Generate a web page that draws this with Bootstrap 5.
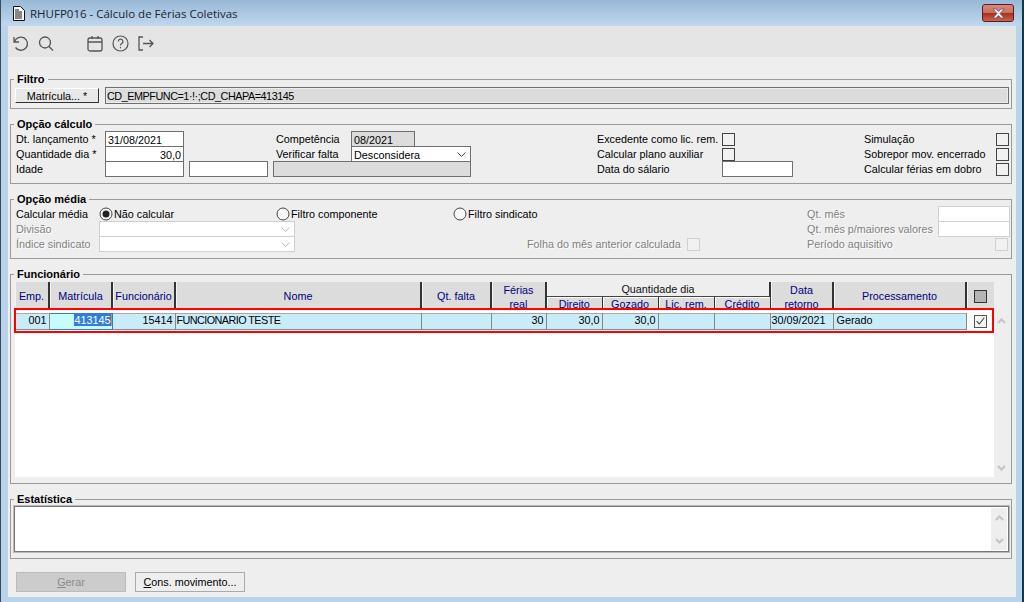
<!DOCTYPE html>
<html lang="pt-BR">
<head>
<meta charset="utf-8">
<title>RHUFP016</title>
<link rel="stylesheet" href="https://cdn.jsdelivr.net/npm/bootstrap@5.3.0/dist/css/bootstrap.min.css">
<style>
html,body{height:100%;overflow:hidden;margin:0}
body{background:#b9d3ec;font-family:"Liberation Sans",Arial,sans-serif;font-size:10.8px;line-height:13px;color:#000}
.wnd{width:1024px;height:602px;display:flex;flex-direction:column;border-left:1px solid #3a4a58;border-right:2px solid #0d3b4a;overflow:hidden}
.ttl{height:26px;flex:none;background:linear-gradient(#98b8d6,#c0d7ee);display:flex;align-items:center;padding:0 8px 0 11px;gap:5px;font-family:"Open Sans",sans-serif;font-size:11.5px;color:#1a2530}
.xbtn{width:32px;height:18px;margin-left:auto;border:1px solid #5a1a2a;border-radius:3px;background:linear-gradient(#d9877c 0,#c9705f 48%,#a82f20 52%,#c9664f 100%);display:flex;align-items:center;justify-content:center}
.body{margin:0 6px 5px 7px;flex:1;background:#eee;display:flex;flex-direction:column;min-height:0}
.tbar{height:31px;flex:none;background:#e5e5e5;display:flex;align-items:center;padding:3px 0 0 4px}
.tbar svg{flex:none;display:block}
.ic2{margin-left:9px}.ic3{margin-left:33px}.ic4{margin-left:9px}.ic5{margin-left:8px}
.main{padding:16px 4px 0 2px;flex:1;min-height:0}
fieldset.grp{border:1px solid #9a9a9a;padding:0 2px 0 5px;margin:0 0 9px;min-width:0}
fieldset.grp legend{float:none;width:auto;font-size:11px;font-weight:700;line-height:12px;margin:0 0 0 -2px;padding:0 3px}
.h36{height:36px}.h66{height:66px}.h216{height:216px}
.pt2{padding-top:2px}.pt1x{padding-top:1px}
.frow{display:flex;column-gap:6px;align-items:flex-start;margin-left:-1px}
.btn.mbtn{width:84px;height:15px;padding:0;font-size:10.8px;line-height:12px;background:#e8e8e8;color:#000;border-radius:0;border:1px solid;border-color:#fff #333 #333 #fff;flex:none;margin-top:1px}
.fld{background:#fff;border:1px solid #6f6f6f;height:16px;line-height:14px;padding:1px 2px 0;white-space:nowrap;overflow:hidden;display:flex;align-items:center;justify-content:space-between}
.fld svg{margin-right:2px}
.fld.gray{background:#dcdcdc}
.fld.r{justify-content:flex-end}
.fld.off{border-color:#d0d0d0}
.filt{flex:1;height:17px;outline:1px solid #ececec;outline-offset:-2px;background:#dcdcdc;padding-left:1px;letter-spacing:-.45px;justify-content:flex-start}
.w64{width:64px;margin-left:1px}
.ml1{margin-left:1px}
.cform{display:grid;grid-template-columns:89px 79px 5px 79px 5px 77px 121px 126px 125px 71px 71px 132px 13px;grid-auto-rows:15px}
.mform{display:grid;grid-template-columns:83px 177px 19px 158px 74px 160px 13px 107px 131px 72px;grid-auto-rows:15px;padding-top:1px}
.lb{white-space:nowrap;padding-top:2px}
.pl3{padding-left:3px}
.dim{color:#808080;text-shadow:1px 1px 0 #fff}
.ck{width:13px;height:13px;border:1px solid #444;background:#f1f1f1;display:block;margin-top:2px}
.ck.off{border-color:#d0d0d0;margin:2px 2px 0 0}
.rad{display:flex;align-items:center;gap:1px;white-space:nowrap;padding-top:1px}
.s2{grid-column:span 2}
.c2{grid-column:2/span 2}.c3{grid-column:3/span 2}.c5{grid-column:5/span 2}.c6{grid-column:6}.c7{grid-column:7}.c9{grid-column:9}.c10{grid-column:10}.c1{grid-column:1}
.tw{position:relative;height:195px;margin-top:2px;background:#fff;margin-left:-1px;padding-right:15px}
.gt{table-layout:fixed;border-collapse:collapse;width:980px}
.gt th{background:#dcdcdc;color:#000080;font-weight:400;text-align:center;border-right:2px solid #333;padding:0;overflow:hidden;vertical-align:middle;line-height:14px;height:14px;box-shadow:inset 1px 0 0 #f4f4f4}
.gt th.sub{background:#dcdcdc;height:12px;border-right:1px solid #333;line-height:12px;padding-top:1px;vertical-align:top;box-shadow:inset 1px 1px 0 #fff}
.gt th.top{background:#eee;color:#111;border-right:2px solid #333;border-bottom:1px solid #444;line-height:13px;padding-top:1px}
.clip{display:block;height:27px;overflow:hidden;line-height:14.5px}
.gt td{background:#c9ecfb;border-right:1px solid #888;border-top:1px solid #aaa;border-bottom:1px solid #888;padding:0 2px 1px 1px;height:16px;white-space:nowrap;overflow:hidden;line-height:13px}
.gt tr.sp td{height:3px;background:#fff;border:0;padding:0}
.gt td.e{text-align:right}
.gt td.pd3{padding-left:3px}
.gt td.ns{letter-spacing:-.55px}
.gt td.cur{background:#c8fbfc;border:1px solid #2a7fd4;text-align:right;padding:0 0 1px}
.gt td.ckc{background:#fff;border:0;text-align:center;padding:0}
.sel{background:#2f7fd6;color:#fff;display:inline-block;line-height:12px;border-right:1px solid #e8862a}
.redbox{position:absolute;left:-1px;top:26px;width:980px;height:25px;border:2px solid #f00;pointer-events:none}
.hck{width:13px;height:13px;background:#b4b4b4;border:1px solid #333;display:inline-block;vertical-align:middle}
.rck{width:13px;height:13px;display:block;margin:0 auto;border:1px solid #555;background:#f6f6f6}
.sb{position:absolute;right:0;top:0;bottom:0;width:15px;background:#eee;display:flex;flex-direction:column;justify-content:space-between;align-items:center;padding:36px 0 6px}
.sb2{position:absolute;right:1px;top:1px;bottom:1px;width:16px;background:#eee;display:flex;flex-direction:column;justify-content:space-between;align-items:center;padding:7px 0 6px}
.tarea{position:relative;height:46px;margin:1px 0 0 -2px;background:#fff;border:1px solid #777;outline:1px solid #bbb;outline-offset:0}
.foot{display:flex;gap:9px;padding-left:6px;margin-top:13px}
.btn.fbtn{width:110px;height:20px;padding:0;font-size:10.8px;line-height:18px;border-radius:0;background:#eee;border:1px solid #aaa;color:#000}
.btn.fbtn.dis{background:#ccc;color:#8a8a8a;opacity:1;border-color:#bbb}
u{text-decoration-thickness:1px}
</style>
</head>
<body>
<div class="wnd">
  <div class="ttl">
    <svg width="13" height="15" viewBox="0 0 13 15"><path d="M1.5.5h7l4 4v10h-11z" fill="#fff" stroke="#111"/><path d="M3 4h4M3 6h7M3 8h7M3 10h7M3 12h7" stroke="#111"/></svg>
    <span>RHUFP016 - Cálculo de Férias Coletivas</span>
    <div class="xbtn"><svg width="15" height="11" viewBox="0 0 15 11"><path d="M2 1h3l2.500 2.500L10 1h3l-4 4.500 4 4.500h-3L7.500 7.500 5 10H2l4-4.500z" fill="#eef" stroke="#555" stroke-width=".7"/></svg></div>
  </div>
  <div class="body">
    <div class="tbar">
      <svg width="17" height="17" viewBox="0 0 17 17" fill="none" stroke="#555" stroke-width="1.300"><path d="M2 2v5h5"/><path d="M2.500 7A6.600 6.600 0 1 1 3.500 12.500"/></svg>
      <svg class="ic2" width="16" height="17" viewBox="0 0 16 17" fill="none" stroke="#555" stroke-width="1.300"><circle cx="7" cy="7.500" r="5.500"/><path d="M11 11.500l4 4"/></svg>
      <svg class="ic3" width="16" height="17" viewBox="0 0 16 17" fill="none" stroke="#555" stroke-width="1.300"><rect x="1" y="3" width="14" height="13" rx="2"/><path d="M1 7h14M5 1v3M11 1v3"/></svg>
      <svg class="ic4" width="17" height="17" viewBox="0 0 17 17" fill="none" stroke="#555" stroke-width="1.200"><circle cx="8.500" cy="8.500" r="7.500"/><path d="M6.300 6.500a2.300 2.300 0 1 1 3.400 2c-.8.500-1.200 1-1.200 2"/><path d="M8.500 12v1.300"/></svg>
      <svg class="ic5" width="17" height="17" viewBox="0 0 17 17" fill="none" stroke="#555" stroke-width="1.300"><path d="M6 2H2v13h4M6 8.500h10M12.500 5l3.500 3.500-3.500 3.500"/></svg>
    </div>
    <div class="main">
      <fieldset class="grp h36">
        <legend>Filtro</legend>
        <div class="frow pt2">
          <button type="button" class="btn mbtn">Matrícula... *</button>
          <div class="fld filt">CD_EMPFUNC=1·!·;CD_CHAPA=413145</div>
        </div>
      </fieldset>
      <fieldset class="grp h66">
        <legend>Opção cálculo</legend>
        <div class="cform pt1x">
          <span class="lb">Dt. lançamento *</span><div class="fld">31/08/2021</div><span></span><span></span><span></span>
          <span class="lb pl3">Competência</span><div class="d-flex"><div class="fld gray w64">08/2021</div></div><span></span>
          <span class="lb">Excedente como lic. rem.</span><span class="ck"></span><span></span><span class="lb">Simulação</span><span class="ck"></span>

          <span class="lb">Quantidade dia *</span><div class="fld r">30,0</div><span></span><span></span><span></span>
          <span class="lb pl3">Verificar falta</span><div class="fld ml1">Desconsidera<svg width="9" height="5" viewBox="0 0 9 5" fill="none" stroke="#444"><path d="M.5.500l4 4 4-4"/></svg></div><span></span>
          <span class="lb">Calcular plano auxiliar</span><span class="ck"></span><span></span><span class="lb">Sobrepor mov. encerrado</span><span class="ck"></span>

          <span class="lb">Idade</span><div class="fld"></div><span></span><div class="fld"></div><span></span>
          <div class="fld gray s2"></div><span></span>
          <span class="lb">Data do sálario</span><div class="fld"></div><span></span><span class="lb">Calcular férias em dobro</span><span class="ck"></span>
        </div>
      </fieldset>
      <fieldset class="grp h66">
        <legend>Opção média</legend>
        <div class="mform">
          <span class="lb c1">Calcular média</span>
          <div class="rad"><svg width="14" height="14" viewBox="0 0 14 14"><circle cx="7" cy="7" r="6" fill="#f6f6f6" stroke="#444"/><circle cx="7" cy="7" r="3.500" fill="#222"/></svg>Não calcular</div>
          <div class="rad c3"><svg width="14" height="14" viewBox="0 0 14 14"><circle cx="7" cy="7" r="6" fill="#f6f6f6" stroke="#444"/></svg>Filtro componente</div>
          <div class="rad c5"><svg width="14" height="14" viewBox="0 0 14 14"><circle cx="7" cy="7" r="6" fill="#f6f6f6" stroke="#444"/></svg>Filtro sindicato</div>
          <span class="lb dim c9">Qt. mês</span><div class="fld off c10"></div>

          <span class="lb dim c1">Divisão</span>
          <div class="fld off c2"><span></span><svg width="9" height="5" viewBox="0 0 9 5" fill="none" stroke="#bbb"><path d="M.5.500l4 4 4-4"/></svg></div>
          <span class="lb dim c9">Qt. mês p/maiores valores</span><div class="fld off c10"></div>

          <span class="lb dim c1">Índice sindicato</span>
          <div class="fld off c2"><span></span><svg width="9" height="5" viewBox="0 0 9 5" fill="none" stroke="#bbb"><path d="M.5.500l4 4 4-4"/></svg></div>
          <span class="lb dim c6">Folha do mês anterior calculada</span><span class="ck off c7"></span><span class="lb dim c9">Período aquisitivo</span><div class="d-flex justify-content-end c10"><span class="ck off"></span></div>
        </div>
      </fieldset>
      <fieldset class="grp h216">
        <legend>Funcionário</legend>
        <div class="tw">
          <table class="gt">
            <colgroup><col style="width:34px"><col style="width:63px"><col style="width:63px"><col style="width:246px"><col style="width:70px"><col style="width:55px"><col style="width:56px"><col style="width:56px"><col style="width:56px"><col style="width:56px"><col style="width:63px"><col style="width:133px"><col style="width:29px"></colgroup>
            <tr>
              <th rowspan="2">Emp.</th><th rowspan="2">Matrícula</th><th rowspan="2">Funcionário</th><th rowspan="2">Nome</th><th rowspan="2">Qt. falta</th>
              <th rowspan="2"><span class="clip">Férias<br>real</span></th>
              <th colspan="4" class="top">Quantidade dia</th>
              <th rowspan="2"><span class="clip">Data<br>retorno</span></th>
              <th rowspan="2">Processamento</th>
              <th rowspan="2"><span class="hck"></span></th>
            </tr>
            <tr><th class="sub">Direito</th><th class="sub">Gozado</th><th class="sub">Lic. rem.</th><th class="sub">Crédito</th></tr>
            <tr class="sp"><td colspan="13"></td></tr>
            <tr>
              <td class="e">001</td><td class="cur"><span class="sel">413145</span></td><td class="e">15414</td><td class="ns">FUNCIONARIO TESTE</td><td></td><td class="e">30</td><td class="e">30,0</td><td class="e">30,0</td><td></td><td></td><td>30/09/2021</td><td class="pd3">Gerado</td>
              <td class="ckc"><svg class="rck" viewBox="0 0 13 13" fill="none" stroke="#333" stroke-width="1.200"><path d="M2 6l3 3.500L11 2"/></svg></td>
            </tr>
          </table>
          <div class="redbox"></div>
          <div class="sb">
            <svg width="9" height="6" viewBox="0 0 9 6" fill="none" stroke="#c4c4c4" stroke-width="2"><path d="M1 5l3.500-3.500L8 5"/></svg>
            <svg width="9" height="6" viewBox="0 0 9 6" fill="none" stroke="#c4c4c4" stroke-width="2"><path d="M1 1l3.500 3.500L8 1"/></svg>
          </div>
        </div>
      </fieldset>
      <fieldset class="grp h66">
        <legend>Estatística</legend>
        <div class="tarea">
          <div class="sb2">
            <svg width="9" height="6" viewBox="0 0 9 6" fill="none" stroke="#c4c4c4" stroke-width="2"><path d="M1 5l3.500-3.500L8 5"/></svg>
            <svg width="9" height="6" viewBox="0 0 9 6" fill="none" stroke="#c4c4c4" stroke-width="2"><path d="M1 1l3.500 3.500L8 1"/></svg>
          </div>
        </div>
      </fieldset>
      <div class="foot">
        <button type="button" class="btn fbtn dis" disabled><u>G</u>erar</button>
        <button type="button" class="btn fbtn"><u>C</u>ons. movimento...</button>
      </div>
    </div>
  </div>
</div>
</body>
</html>
